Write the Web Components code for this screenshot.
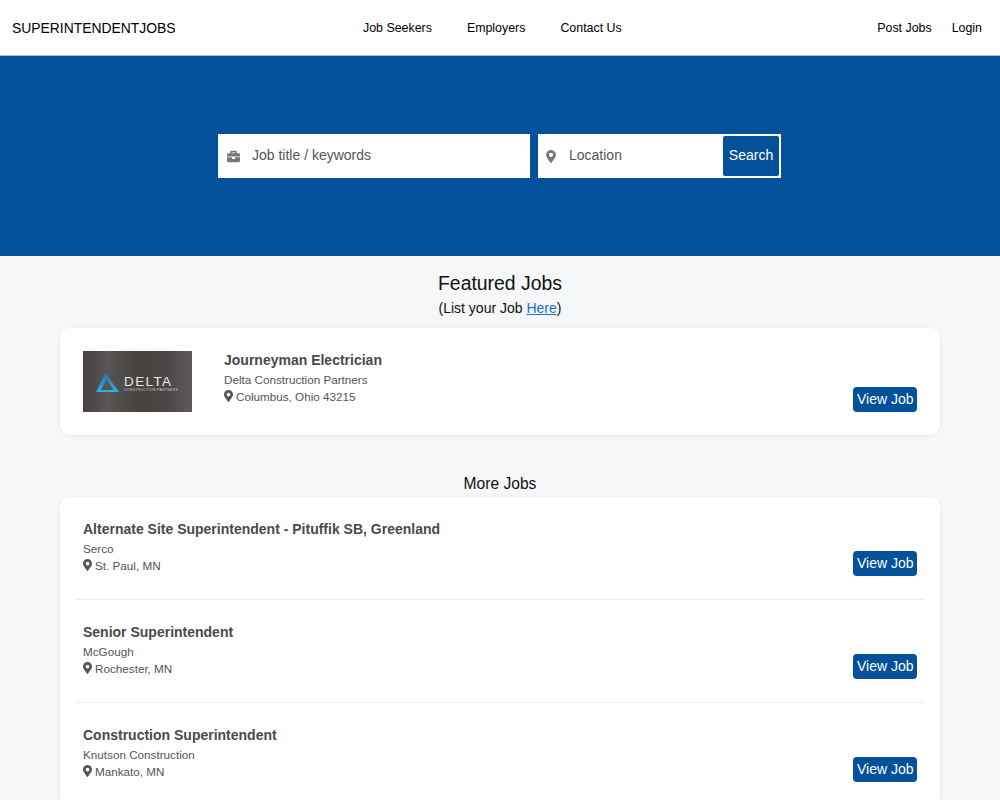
<!DOCTYPE html>
<html>
<head>
<meta charset="utf-8">
<title>SuperintendentJobs</title>
<style>
  html, body { margin: 0; padding: 0; background: #f5f7f9; font-family: "Liberation Sans", Arial, sans-serif; height: 800px; overflow: hidden; }
</style>
</head>
<body>
<site-header></site-header>
<search-hero></search-hero>
<section-title heading="Featured Jobs" large><span>(List your Job <a href="#" style="color:#1a6fd8">Here</a>)</span></section-title>
<job-list>
  <job-row title="Journeyman Electrician" company="Delta Construction Partners" location="Columbus, Ohio 43215" logo></job-row>
</job-list>
<section-title heading="More Jobs"></section-title>
<job-list>
  <job-row title="Alternate Site Superintendent - Pituffik SB, Greenland" company="Serco" location="St. Paul, MN"></job-row>
  <job-row title="Senior Superintendent" company="McGough" location="Rochester, MN"></job-row>
  <job-row title="Construction Superintendent" company="Knutson Construction" location="Mankato, MN"></job-row>
</job-list>

<script>
const pin = (w, h) => `<svg viewBox="0 0 384 512" width="${w}" height="${h}" fill="currentColor"><path d="M172.3 501.700C27 291 0 269.400 0 192 0 86 86 0 192 0s192 86 192 192c0 77.400-27 99-172.300 309.700-9.500 13.800-29.900 13.800-39.400 0zM192 272a80 80 0 1 0 0-160 80 80 0 0 0 0 160z"/></svg>`;
const CASE = `<svg viewBox="0 0 512 512" width="13" height="13" fill="currentColor"><path d="M320 336c0 8.800-7.200 16-16 16h-96c-8.800 0-16-7.200-16-16v-48H0v144c0 25.600 22.400 48 48 48h416c25.600 0 48-22.400 48-48V288H320v48zm144-208h-80V80c0-25.600-22.400-48-48-48H176c-25.600 0-48 22.400-48 48v48H48c-25.600 0-48 22.400-48 48v80h512v-80c0-25.600-22.400-48-48-48zm-144 0H192V96h128v32z"/></svg>`;

class SiteHeader extends HTMLElement {
  constructor() {
    super();
    this.attachShadow({ mode: 'open' }).innerHTML = `
      <style>
        :host { display: flex; align-items: center; height: 55px; padding: 0 18px 0 12px; background: #fff; color: #000; font-size: 12.4px; }
        .brand { font-size: 13.9px; width: 351px; }
        nav { display: flex; gap: 35px; }
        .right { display: flex; gap: 20px; margin-left: auto; }
      </style>
      <div class="brand">SUPERINTENDENTJOBS</div>
      <nav><span>Job Seekers</span><span>Employers</span><span>Contact Us</span></nav>
      <div class="right"><span>Post Jobs</span><span>Login</span></div>`;
  }
}

class SearchHero extends HTMLElement {
  constructor() {
    super();
    this.attachShadow({ mode: 'open' }).innerHTML = `
      <style>
        :host { display: flex; justify-content: center; align-items: flex-start; gap: 8px; height: 201px; padding: 78px 1px 0 0; box-sizing: border-box; background: #03519a; border-top: 1px solid #a9c2da; }
        .field { display: flex; align-items: center; height: 44px; background: #fff; color: #555; font-size: 14px; box-sizing: border-box; }
        .kw { width: 312px; padding-left: 9px; gap: 12px; }
        .loc { width: 243px; padding-left: 8px; gap: 13px; }
        .icon { color: #777; display: flex; }
        .grow { flex: 1; padding-bottom: 2px; }
        button { height: 40px; width: 56px; margin-right: 2px; border: 0; background: #03519a; color: #fff; font: inherit; padding: 0 0 2px; border-radius: 2px; }
      </style>
      <div class="field kw"><span class="icon">${CASE}</span><span class="grow">Job title / keywords</span></div>
      <div class="field loc"><span class="icon">${pin(10, 13)}</span><span class="grow">Location</span><button>Search</button></div>`;
  }
}

class SectionTitle extends HTMLElement {
  constructor() {
    super();
    this.attachShadow({ mode: 'open' }).innerHTML = `
      <style>
        :host { display: block; text-align: center; color: #111; font-size: 14px; }
        h2 { margin: 0; font-weight: 400; font-size: 15.6px; line-height: 19px; }
        :host([large]) h2 { font-size: 19.4px; line-height: 24px; }
        :host([large]) { padding: 15px 0 10px; }
        :host(:not([large])) { padding: 39px 0 4px; }
        .sub { line-height: 20px; }
        :host([large]) .sub { margin-top: 3px; }
      </style>
      <h2>${this.getAttribute('heading')}</h2>
      <div class="sub"><slot></slot></div>`;
  }
}

class JobList extends HTMLElement {
  constructor() {
    super();
    this.attachShadow({ mode: 'open' }).innerHTML = `
      <style>
        :host { display: block; margin: 0 60px; background: #fff; border-radius: 10px; box-shadow: 0 1px 5px rgba(0,0,0,.06); padding: 0 16px; }
        ::slotted(job-row:not(:first-child)) { border-top: 1px solid #eee; }
      </style>
      <slot></slot>`;
  }
}

class JobRow extends HTMLElement {
  constructor() {
    super();
    const logo = this.hasAttribute('logo');
    this.attachShadow({ mode: 'open' }).innerHTML = `
      <style>
        :host { display: flex; padding: 23px 7px; color: #555; font-size: 11.7px; }
        .logo { flex: none; width: 109px; height: 61px; margin-right: 32px; background: linear-gradient(90deg, #444140, #5a5655 22%, #454240 50%, #4a4645 75%, #5f5b5a); display: flex; align-items: center; gap: 5px; color: #e6e6e6; padding: 2px 0 0 13px; box-sizing: border-box; }
        .text { margin-top: 3px; }
        .word { font-size: 13.5px; letter-spacing: 1.4px; line-height: 13px; }
        .tag { font-size: 3.5px; line-height: 5px; letter-spacing: .3px; color: #ccc; white-space: nowrap; }
        .info { flex: 1; min-height: 56px; }
        h3 { margin: 0 0 2px; font-size: 14px; line-height: 18px; color: #4a4a4a; }
        .line { line-height: 17px; }
        .line svg { vertical-align: -1px; margin-right: 3px; }
        a { align-self: flex-end; background: #03519a; color: #fff; border-radius: 4px; font-size: 14px; line-height: 24px; padding: 0 3.5px 1px; }
      </style>
      ${logo ? `<div class="logo"><svg width="23" height="19" viewBox="0 0 23 19"><defs><linearGradient id="g" x1="0" y1="0" x2="0" y2="1"><stop offset="0" stop-color="#2b6fc8"/><stop offset="1" stop-color="#27b5dc"/></linearGradient></defs><path fill-rule="evenodd" d="M9.500 0 23 19H0zM10.500 6 17.500 17H5z" fill="url(#g)"/></svg><div class="text"><div class="word">DELTA</div><div class="tag">CONSTRUCTION PARTNERS</div></div></div>` : ''}
      <div class="info">
        <h3>${this.getAttribute('title')}</h3>
        <div class="line">${this.getAttribute('company')}</div>
        <div class="line">${pin(9, 12)}${this.getAttribute('location')}</div>
      </div>
      <a>View Job</a>`;
  }
}

customElements.define('site-header', SiteHeader);
customElements.define('search-hero', SearchHero);
customElements.define('section-title', SectionTitle);
customElements.define('job-list', JobList);
customElements.define('job-row', JobRow);
</script>
</body>
</html>
